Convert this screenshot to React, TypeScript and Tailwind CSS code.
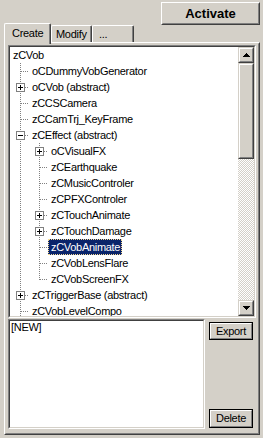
import React from "react";

type CellType = "pipe" | "tee" | "ell" | "blank";
type Row = { label: string; cells: CellType[]; box?: "+" | "-"; selected?: boolean };

const rows: Row[] = [
  { label: "zCVob", cells: [] },
  { label: "oCDummyVobGenerator", cells: ["tee"] },
  { label: "oCVob (abstract)", cells: ["tee"], box: "+" },
  { label: "zCCSCamera", cells: ["tee"] },
  { label: "zCCamTrj_KeyFrame", cells: ["tee"] },
  { label: "zCEffect (abstract)", cells: ["tee"], box: "-" },
  { label: "oCVisualFX", cells: ["pipe", "tee"], box: "+" },
  { label: "zCEarthquake", cells: ["pipe", "tee"] },
  { label: "zCMusicControler", cells: ["pipe", "tee"] },
  { label: "zCPFXControler", cells: ["pipe", "tee"] },
  { label: "zCTouchAnimate", cells: ["pipe", "tee"], box: "+" },
  { label: "zCTouchDamage", cells: ["pipe", "tee"], box: "+" },
  { label: "zCVobAnimate", cells: ["pipe", "tee"], selected: true },
  { label: "zCVobLensFlare", cells: ["pipe", "tee"] },
  { label: "zCVobScreenFX", cells: ["pipe", "ell"] },
  { label: "zCTriggerBase (abstract)", cells: ["tee"], box: "+" },
  { label: "zCVobLevelCompo", cells: ["tee"] },
];

function Cell({ type, box }: { type: CellType; box?: "+" | "-" }) {
  return (
    <svg width="19" height="16" className="block shrink-0" shapeRendering="crispEdges">
      {type !== "blank" && (
        <line x1="10.5" y1="0" x2="10.5" y2={type === "ell" ? 9 : 16} stroke="#808080" strokeDasharray="1 1" />
      )}
      {(type === "tee" || type === "ell") && (
        <line x1="11" y1="8.5" x2="19" y2="8.5" stroke="#808080" strokeDasharray="1 1" />
      )}
      {box && (
        <>
          <rect x="6.5" y="4.5" width="8" height="8" fill="#ffffff" stroke="#808080" />
          <line x1="8" y1="8.5" x2="13" y2="8.5" stroke="#000000" />
          {box === "+" && <line x1="10.5" y1="6" x2="10.5" y2="11" stroke="#000000" />}
        </>
      )}
    </svg>
  );
}

function ScrollBtn({ dir }: { dir: "up" | "down" }) {
  return (
    <div className="w-[16px] h-[16px] shrink-0 border border-t-[#d4d0c8] border-l-[#d4d0c8] border-r-[#404040] border-b-[#404040]">
      <div className="w-full h-full border border-t-white border-l-white border-r-[#808080] border-b-[#808080] bg-[#d4d0c8] flex items-center justify-center">
        <svg width="7" height="4" className="block" shapeRendering="crispEdges">
          {dir === "up" ? (
            <polygon points="3.5,0 7,4 0,4" fill="#000" />
          ) : (
            <polygon points="0,0 7,0 3.5,4" fill="#000" />
          )}
        </svg>
      </div>
    </div>
  );
}

function WinButton({ label, h }: { label: string; h: string }) {
  return (
    <div className={`w-[44px] ${h} border border-black`}>
      <div className="w-full h-full border border-t-white border-l-white border-r-[#808080] border-b-[#808080] flex items-center justify-center leading-none">
        {label}
      </div>
    </div>
  );
}

export default function App() {
  return (
    <div className="w-[263px] h-[438px] bg-[#d4d0c8] text-black text-[11px] tracking-[-0.3px] font-['Liberation_Sans',Arial,sans-serif] flex flex-col overflow-hidden">
      {/* Top bar */}
      <div className="h-[23px] flex justify-end pr-[3px] relative z-20">
        <div className="mt-[2px] w-[99px] h-[23px] border border-t-white border-l-white border-r-[#404040] border-b-[#404040]">
          <div className="w-full h-full border border-t-[#d4d0c8] border-l-[#d4d0c8] border-r-[#808080] border-b-[#808080] flex items-center justify-center font-bold text-[13px] tracking-normal">
            Activate
          </div>
        </div>
      </div>

      {/* Tabs */}
      <div className="h-[19px] flex items-end pl-[4px] relative z-10">
        <div className="w-[47px] h-[21px] -mb-[2px] bg-[#d4d0c8] border-l border-t border-r border-l-white border-t-white border-r-[#404040] rounded-tl-[2px] rounded-tr-[2px]">
          <div className="h-full border-r border-r-[#808080] pl-[7px] pt-[2px] leading-[14px]">Create</div>
        </div>
        <div className="w-[41px] h-[17px] border-l border-t border-r border-l-white border-t-white border-r-[#404040] rounded-tl-[2px] rounded-tr-[2px]">
          <div className="h-full border-r border-r-[#808080] pl-[4px] pt-[1px] leading-[14px]">Modify</div>
        </div>
        <div className="w-[42px] h-[17px] border-l border-t border-r border-l-white border-t-white border-r-[#404040] rounded-tl-[2px] rounded-tr-[2px]">
          <div className="h-full border-r border-r-[#808080] pl-[6px] pt-[1px] leading-[14px]">...</div>
        </div>
      </div>

      {/* Panel */}
      <div className="ml-[4px] w-[256px] h-[393px] border border-t-white border-l-white border-r-[#404040] border-b-[#404040]">
        <div className="w-full h-full border border-t-[#d4d0c8] border-l-[#d4d0c8] border-r-[#808080] border-b-[#808080] pl-[2px] pt-[1px] flex flex-col">
          {/* Tree */}
          <div className="w-[248px] h-[273px] shrink-0 border border-t-[#808080] border-l-[#808080] border-r-white border-b-white">
            <div className="w-full h-full border border-t-[#404040] border-l-[#404040] border-r-[#d4d0c8] border-b-[#d4d0c8] bg-white flex">
              <div className="flex-1 overflow-hidden flex flex-col">
                {rows.map((r, i) => (
                  <div key={i} className="h-[16px] shrink-0 flex items-stretch">
                    {r.cells.map((c, j) => (
                      <Cell key={j} type={c} box={j === r.cells.length - 1 ? r.box : undefined} />
                    ))}
                    <span
                      className={
                        r.selected
                          ? "h-[16px] leading-[16px] pl-[3px] pr-[2px] whitespace-nowrap bg-[#0a246a] text-white outline-1 outline-dotted outline-[#f5db95] -outline-offset-1"
                          : "h-[16px] leading-[16px] pl-[3px] pr-[2px] whitespace-nowrap"
                      }
                    >
                      {r.label}
                    </span>
                  </div>
                ))}
              </div>
              <div className="w-[16px] shrink-0 flex flex-col">
                <ScrollBtn dir="up" />
                <div className="h-[96px] shrink-0 border border-t-[#d4d0c8] border-l-[#d4d0c8] border-r-[#404040] border-b-[#404040]">
                  <div className="w-full h-full border border-t-white border-l-white border-r-[#808080] border-b-[#808080] bg-[#d4d0c8]" />
                </div>
                <div className="flex-1 bg-[conic-gradient(#ffffff_25%,#d4d0c8_0_50%,#ffffff_0_75%,#d4d0c8_0)] bg-[length:2px_2px]" />
                <ScrollBtn dir="down" />
              </div>
            </div>
          </div>

          {/* Bottom area */}
          <div className="mt-[1px] h-[110px] flex">
            <div className="w-[197px] h-full border border-t-[#808080] border-l-[#808080] border-r-white border-b-white">
              <div className="w-full h-full border border-t-[#404040] border-l-[#404040] border-r-[#d4d0c8] border-b-[#d4d0c8] bg-white pl-[1px] leading-[13px]">
                [NEW]
              </div>
            </div>
            <div className="ml-[4px] w-[44px] h-full flex flex-col justify-between pt-[3px] pb-[1px]">
              <WinButton label="Export" h="h-[18px]" />
              <WinButton label="Delete" h="h-[19px]" />
            </div>
          </div>
        </div>
      </div>
    </div>
  );
}
